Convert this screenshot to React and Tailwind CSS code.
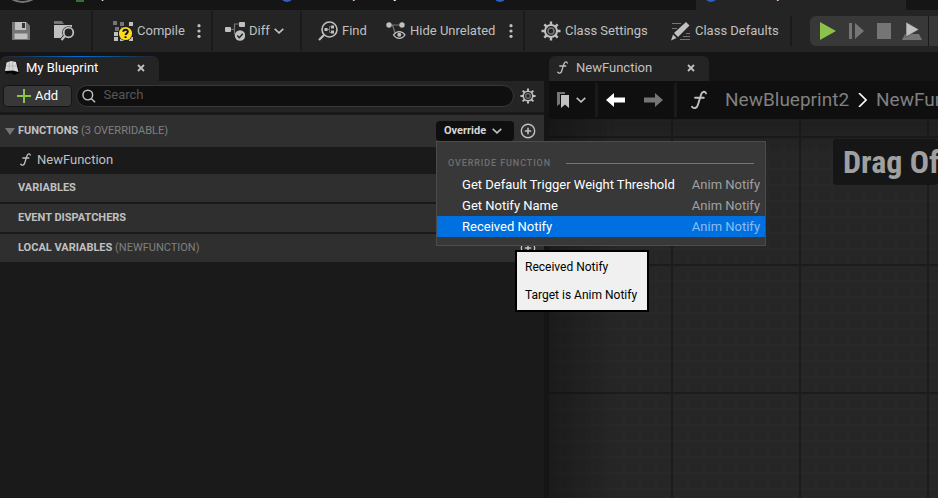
const sections = [
  { title: 'VARIABLES', note: '' },
  { title: 'EVENT DISPATCHERS', note: '' },
  { title: 'LOCAL VARIABLES', note: '(NEWFUNCTION)' },
]

const overrides = [
  { name: 'Get Default Trigger Weight Threshold', owner: 'Anim Notify' },
  { name: 'Get Notify Name', owner: 'Anim Notify' },
  { name: 'Received Notify', owner: 'Anim Notify', active: true },
]

function SaveIcon() {
  return (
    <svg width="18" height="18" viewBox="0 0 18 18">
      <path d="M0 0h14.500l3.500 3.500V18H0z" fill="#757575" />
      <path d="M3 0h11v8H3z" fill="#c0c0c0" />
      <path d="M10 1h3v5h-3z" fill="#333" />
      <path d="M2.500 11.500h13V17h-13z" fill="#c0c0c0" />
    </svg>
  )
}

function BrowseIcon() {
  return (
    <svg width="21" height="20" viewBox="0 0 21 20">
      <path d="M0 0h8l2 3H0z" fill="#757575" />
      <path d="M0 4h18v13H0z" fill="#c0c0c0" />
      <circle cx="14.500" cy="11.500" r="6.300" fill="#242424" />
      <path d="M10 13l-4 5h4l4-4z" fill="#242424" />
      <circle cx="14.500" cy="11.500" r="4.800" fill="none" stroke="#c0c0c0" strokeWidth="1.800" />
      <path d="M11 15l-3.500 4" stroke="#c0c0c0" strokeWidth="2.200" />
    </svg>
  )
}

function CompileIcon() {
  return (
    <svg width="20" height="20" viewBox="0 0 20 20">
      <path d="M0 0h4v4H0zM7 1h4v4H7zM2 6h4v4H2z" fill="#757575" />
      <path d="M16 1h4v4h-4zM1 11h4v4H1zM1 16h4v4H1zM7 16h4v4H7zM16 16h4v4h-4zM8 6h4v4H8z" fill="#c0c0c0" />
      <circle cx="12.500" cy="12.500" r="7.300" fill="#1a1a1a" />
      <circle cx="12.500" cy="12.500" r="6.600" fill="#fcdc1a" />
      <path d="M10.300 10.800c.2-2.800 4.600-2.600 4.500 0 0 1.600-2.200 1.500-2.200 3.200M12.500 15.200v1.900" fill="none" stroke="#151515" strokeWidth="2" />
    </svg>
  )
}

function DiffIcon() {
  return (
    <svg width="20" height="19" viewBox="0 0 20 19">
      <path d="M5 7.500h4.500M9.500 7.500V2H14M9.500 7.500v4l2 2" fill="none" stroke="#757575" strokeWidth="1.200" />
      <rect x="0" y="5" width="6" height="5" rx="1" fill="#c0c0c0" />
      <rect x="14" y="0" width="6" height="5" rx="1" fill="#c0c0c0" />
      <circle cx="15" cy="13.500" r="5.200" fill="#c0c0c0" />
      <path d="M12.300 13.500l2 2.200 3.500-4" fill="none" stroke="#242424" strokeWidth="1.500" />
    </svg>
  )
}

function FindIcon() {
  return (
    <svg width="20" height="20" viewBox="0 0 20 20">
      <circle cx="11.500" cy="8.500" r="7.500" fill="none" stroke="#c0c0c0" strokeWidth="1.600" />
      <path d="M6 14L1 19" stroke="#c0c0c0" strokeWidth="2.200" />
      <path d="M9 8.500h2.500M14 5.500h-2.500v6H14" fill="none" stroke="#757575" />
      <path d="M6.500 7h3v3h-3zM13 4.500h3v3h-3zM13 9.500h3v3h-3z" fill="#c0c0c0" />
    </svg>
  )
}

function HideIcon() {
  return (
    <svg width="20" height="18" viewBox="0 0 20 18">
      <path d="M3 3h13M6.500 3L9 11" fill="none" stroke="#757575" strokeWidth="1.200" />
      <circle cx="3" cy="3" r="2.700" fill="#c0c0c0" />
      <circle cx="16" cy="3" r="2.700" fill="#c0c0c0" />
      <path d="M7.500 13c3-4.500 8.500-4.500 11.500 0-3 4.500-8.500 4.500-11.500 0z" fill="#242424" stroke="#c0c0c0" strokeWidth="1.300" />
      <circle cx="13.300" cy="12.800" r="2" fill="#c0c0c0" />
    </svg>
  )
}

function GearIcon({ size }) {
  return (
    <svg width={size} height={size} viewBox="0 0 20 20">
      <g stroke="#c0c0c0" strokeWidth="2.400">
        <path d="M10 .5v19M.5 10h19M3.300 3.300l13.400 13.400M16.700 3.300L3.300 16.700" />
      </g>
      <circle cx="10" cy="10" r="6" fill="#242424" stroke="#c0c0c0" strokeWidth="2" />
      <circle cx="10" cy="10" r="3" fill="none" stroke="#757575" strokeWidth="1.600" />
    </svg>
  )
}

function DefaultsIcon() {
  return (
    <svg width="20" height="19" viewBox="0 0 20 19">
      <path d="M1 1.500h9M1 6.500h5M15 11.500h4M12 14.500h7M9 17.500h10" stroke="#757575" />
      <path d="M15 0l3.500 3.500L7 15l-4-4z" fill="#c0c0c0" />
      <path d="M2 12.500l3.500 3.500-5.500 2.500z" fill="#c0c0c0" />
    </svg>
  )
}

function Chevron() {
  return (
    <svg width="10" height="6" viewBox="0 0 10 6">
      <path d="M.7.800l4.300 4 4.300-4" fill="none" stroke="#c0c0c0" strokeWidth="1.600" />
    </svg>
  )
}

function Dots() {
  return (
    <button type="button" aria-label="More options" className="w-4 flex justify-center">
      <svg width="4" height="14" viewBox="0 0 4 14" fill="#c0c0c0">
        <circle cx="2" cy="1.700" r="1.600" />
        <circle cx="2" cy="7" r="1.600" />
        <circle cx="2" cy="12.300" r="1.600" />
      </svg>
    </button>
  )
}

function Divider() {
  return <div className="w-0.5 h-10 shrink-0 bg-[#1a1a1a]" />
}

function FunctionIcon({ className }) {
  return (
    <svg className={className} viewBox="0 0 11 13">
      <path
        d="M10.300 2C10 .3 7.700.3 7 2.600L4.700 10c-.6 2.300-3 2.700-4 1.200M2.800 5h6"
        fill="none"
        stroke="#c0c0c0"
        strokeWidth="1.300"
        strokeLinecap="round"
      />
    </svg>
  )
}

function AddCircle() {
  return (
    <svg width="16" height="16" viewBox="0 0 16 16" fill="none" stroke="#c0c0c0">
      <circle cx="8" cy="8" r="6.700" strokeWidth="1.400" />
      <path d="M8 4.800v6.400M4.800 8h6.400" strokeWidth="1.600" />
    </svg>
  )
}

function CloseIcon() {
  return (
    <svg width="8" height="8" viewBox="0 0 8 8">
      <path d="M1 1l6 6M7 1L1 7" stroke="#c0c0c0" strokeWidth="1.800" />
    </svg>
  )
}

function AssetTabs() {
  return (
    <div className="h-2.5 shrink-0 flex overflow-hidden whitespace-nowrap text-white">
      <div className="w-[76px] pl-3">
        <svg width="21" height="4" viewBox="0 0 21 4">
          <path d="M0-1Q10.500 5 21-1" fill="none" stroke="#757575" strokeWidth="2" />
        </svg>
      </div>
      <div className="w-[205px] flex gap-2">
        <span className="w-2 h-0.5 bg-[#3c6a3a]" />
        <span className="-mt-3.5 leading-4">Open</span>
      </div>
      <div className="w-[213px] flex gap-2">
        <span className="-mt-2.5 size-3 rounded-full bg-[#2f5fc0]" />
        <span className="-mt-3.5 leading-4">NewBlueprintKey</span>
      </div>
      <div className="w-[202px]">
        <span className="-mt-2.5 block size-3 rounded-full bg-[#2f5fc0]" />
      </div>
      <div className="w-[210px] pl-[9px] flex gap-2 bg-[#242424]">
        <span className="-mt-2.5 size-3 rounded-full bg-[#2f5fc0]" />
        <span className="-mt-3.5 leading-4">NewBlueprint2</span>
      </div>
    </div>
  )
}

function Toolbar() {
  return (
    <div className="h-[42px] shrink-0 flex items-center bg-[#242424] overflow-hidden whitespace-nowrap">
      <div className="w-[91px] shrink-0 pl-3 flex items-center gap-6">
        <button type="button" aria-label="Save"><SaveIcon /></button>
        <button type="button" aria-label="Browse"><BrowseIcon /></button>
      </div>
      <Divider />
      <div className="w-[118px] shrink-0 pl-5 flex items-center">
        <button type="button" className="w-[78px] flex items-center gap-1"><CompileIcon />Compile</button>
        <Dots />
      </div>
      <Divider />
      <div className="w-[87px] shrink-0 pl-3">
        <button type="button" className="flex items-center gap-1"><DiffIcon />Diff<Chevron /></button>
      </div>
      <Divider />
      <div className="w-[221px] shrink-0 pl-4 flex items-center">
        <button type="button" className="w-[68px] flex items-center gap-1"><FindIcon />Find</button>
        <button type="button" className="w-[117px] flex items-center gap-1"><HideIcon />Hide Unrelated</button>
        <Dots />
      </div>
      <Divider />
      <div className="w-[265px] shrink-0 pl-4 flex items-center">
        <button type="button" className="w-[130px] flex items-center gap-1"><GearIcon size={20} />Class Settings</button>
        <button type="button" className="flex items-center gap-1"><DefaultsIcon />Class Defaults</button>
      </div>
      <div className="w-0.5 h-[30px] shrink-0 bg-[#1a1a1a]" />
      <div className="ml-[18px] h-[30px] shrink-0 flex items-center rounded-l-md bg-[#383838]">
        <div className="w-[118px] pl-2.5 flex items-center">
          <button type="button" aria-label="Play" className="w-[28px]">
            <svg width="16" height="18" viewBox="0 0 16 18"><path d="M0 0l16 9-16 9z" fill="#8bc24a" /></svg>
          </button>
          <button type="button" aria-label="Step" className="w-[29px]">
            <svg width="16" height="16" viewBox="0 0 16 16" fill="#757575"><path d="M1 0h3v16H1zM7 0l9 8-9 8z" /></svg>
          </button>
          <button type="button" aria-label="Stop" className="w-[25px]">
            <svg width="14" height="16" viewBox="0 0 14 16"><path d="M0 0h14v16H0z" fill="#757575" /></svg>
          </button>
          <button type="button" aria-label="Eject">
            <svg width="20" height="18" viewBox="0 0 20 18">
              <path d="M3 12h14l3 6H0z" fill="#757575" />
              <path d="M4 0l13 7.500L4 15z" fill="#c0c0c0" stroke="#383838" strokeWidth=".6" />
            </svg>
          </button>
        </div>
        <div className="w-px h-[30px] bg-[#1a1a1a]" />
        <div className="w-20" />
      </div>
    </div>
  )
}

function OverrideMenu() {
  return (
    <div className="absolute z-10 top-full left-0 w-[330px] pt-[13px] pb-2 bg-[#383838] border border-[#4c4c4c] text-[13px]">
      <div className="px-[11px] flex items-center gap-[15px]">
        <span className="text-[9px] leading-4 font-medium tracking-widest text-[#707070]">OVERRIDE FUNCTION</span>
        <div className="h-px flex-1 bg-[#757575]" />
      </div>
      <ul className="pt-[3px]">
        {overrides.map((item) => (
          <li key={item.name} className={item.active ? 'bg-[#0070e0]' : ''}>
            <button type="button" className="w-full h-[21px] pl-[25px] pr-[5px] flex items-center justify-between">
              <span className="text-white">{item.name}</span>
              <span className={item.active ? 'text-[#8cbcf0]' : 'text-[#a0a0a0]'}>{item.owner}</span>
            </button>
          </li>
        ))}
      </ul>
      <div
        role="tooltip"
        className="absolute top-[108px] left-[78px] w-[134px] h-[62px] px-2 bg-[#f0f0f0] border-2 border-black text-xs leading-[28px] text-black flex flex-col justify-center"
      >
        <p>Received Notify</p>
        <p>Target is Anim Notify</p>
      </div>
    </div>
  )
}

function MyBlueprint() {
  return (
    <section className="w-[58%] shrink-0 flex flex-col">
      <div className="h-[29px] flex items-end">
        <div className="w-[159px] h-[25px] px-1 pb-0.5 flex flex-col rounded-t-md bg-[#242424] overflow-hidden">
          <div className="h-px shrink-0 bg-linear-to-r from-transparent via-[#0070e0] to-transparent" />
          <div className="flex-1 flex items-center text-white">
            <svg width="16" height="15" viewBox="0 0 16 15">
              <path d="M1 9l2-8h10l2 8v3l-5 2-3-2-5 1z" fill="#050505" />
              <path d="M1 10L2.500 1.500 7 0l5 1L14.500 11 9 9.500z" fill="#d8d8d8" />
              <path d="M5.500 1L5 9.500M8.500 1l.5 8.500M2 5h11" stroke="#a8a8a8" strokeWidth=".6" />
            </svg>
            <span className="pl-1.5 flex-1">My Blueprint</span>
            <button type="button" aria-label="Close My Blueprint" className="pr-2.5"><CloseIcon /></button>
          </div>
        </div>
      </div>
      <div className="h-[31px] pb-0.5 pl-[3px] pr-2 flex items-center bg-[#242424]">
        <button type="button" className="w-[69px] h-[22px] flex items-center justify-center gap-1 rounded bg-[#383838] border border-[#141414] text-white">
          <svg width="14" height="14" viewBox="0 0 14 14"><path d="M7 0v14M0 7h14" stroke="#8bc24a" strokeWidth="2" /></svg>
          Add
        </button>
        <label className="ml-1 mr-1.5 h-[22px] flex-1 flex items-center rounded-full bg-[#0f0f0f] border border-[#383838] pl-[5px]">
          <svg width="14" height="14" viewBox="0 0 14 14" fill="none" stroke="#c0c0c0" strokeWidth="1.500">
            <circle cx="6" cy="6" r="5" />
            <path d="M9.500 9.500L13.500 13.500" />
          </svg>
          <input type="text" aria-label="Search" placeholder="Search" className="w-full pl-2 pb-0.5 bg-transparent outline-none placeholder:text-[#575757]" />
        </label>
        <button type="button" aria-label="Panel settings"><GearIcon size={16} /></button>
      </div>
      <div className="flex-1 pt-[3px] bg-[#1a1a1a] text-[11px]">
        <div className="h-8 pl-[5px] pr-2 flex items-center bg-[#2f2f2f]">
          <svg width="10" height="7" viewBox="0 0 10 7"><path d="M0 0h10L5 7z" fill="#757575" /></svg>
          <h2 className="pl-[3px] flex-1 text-[#808080]"><b className="font-bold text-[#c0c0c0]">FUNCTIONS</b> (3 OVERRIDABLE)</h2>
          <div className="relative mr-1.5">
            <button type="button" className="w-[78px] h-5 pl-2 flex items-center gap-1.5 rounded bg-[#0f0f0f] font-bold text-[#d8d8d8]">
              Override
              <Chevron />
            </button>
            <OverrideMenu />
          </div>
          <button type="button" aria-label="Add function"><AddCircle /></button>
        </div>
        <div className="h-[27px] pb-0.5 pl-5 flex items-center gap-1.5 text-[13px]">
          <FunctionIcon className="w-[11px] h-[13px]" />
          NewFunction
        </div>
        <div className="flex flex-col gap-0.5">
          {sections.map((section) => (
            <div key={section.title} className="h-7 pl-[18px] pr-2 flex items-center bg-[#2f2f2f]">
              <h2 className="flex-1 text-[#808080]"><b className="font-bold text-[#c0c0c0]">{section.title}</b> {section.note}</h2>
              <button type="button" aria-label={'Add to ' + section.title}><AddCircle /></button>
            </div>
          ))}
        </div>
      </div>
    </section>
  )
}

function Graph() {
  return (
    <section className="flex-1 min-w-0 ml-[5px] flex flex-col whitespace-nowrap">
      <div className="h-[29px] flex items-end">
        <div className="w-40 h-[25px] px-2 pb-0.5 flex items-center rounded-t-md bg-[#242424]">
          <FunctionIcon className="w-[11px] h-[13px]" />
          <span className="pl-2 flex-1">NewFunction</span>
          <button type="button" aria-label="Close NewFunction" className="pr-1.5"><CloseIcon /></button>
        </div>
      </div>
      <div className="h-[38px] shrink-0 flex items-center overflow-hidden bg-[#0f0f0f]">
        <button type="button" aria-label="Bookmarks" className="w-[46px] shrink-0 pl-2 flex items-center gap-[7px]">
          <svg width="12" height="16" viewBox="0 0 12 16">
            <path d="M0 0h8v2H3v10l-3 2z" fill="#757575" />
            <path d="M4 3h8v13l-4-3.500L4 16z" fill="#c0c0c0" />
          </svg>
          <Chevron />
        </button>
        <div className="w-[3px] h-[34px] shrink-0 bg-[#1a1a1a]" />
        <button type="button" aria-label="Back" className="w-[38px] shrink-0 pl-2">
          <svg width="19" height="14" viewBox="0 0 19 14"><path d="M0 7l8-7v4.500h11v5H8V14z" fill="#fff" /></svg>
        </button>
        <button type="button" aria-label="Forward" className="w-[38px] shrink-0 pl-2">
          <svg width="19" height="14" viewBox="0 0 19 14"><path d="M19 7l-8-7v4.500H0v5h11V14z" fill="#757575" /></svg>
        </button>
        <div className="w-[3px] h-[34px] shrink-0 bg-[#1a1a1a]" />
        <FunctionIcon className="ml-3.5 w-4 h-5 shrink-0" />
        <nav className="pl-[18px] flex shrink-0 items-center gap-[9px] text-[19px] text-[#808080]">
          <a href="#NewBlueprint2">NewBlueprint2</a>
          <svg width="9" height="14" viewBox="0 0 9 14"><path d="M1 0l7 7-7 7" fill="none" stroke="#fff" strokeWidth="1.600" /></svg>
          <a href="#NewFunction">NewFunction</a>
        </nav>
      </div>
      <div className="flex-1 overflow-hidden bg-[#262626] bg-[linear-gradient(90deg,#0000004d,transparent_70px),linear-gradient(180deg,#00000033,transparent_40px),linear-gradient(90deg,#1c1c1c_2px,transparent_2px),linear-gradient(180deg,#1c1c1c_2px,transparent_2px),linear-gradient(90deg,#282828_2px,transparent_2px),linear-gradient(180deg,#282828_2px,transparent_2px)] bg-size-[auto,auto,128px_128px,128px_128px,16px_16px,16px_16px] bg-position-[0_0,0_0,122px_0,0_17px,10px_0,0_1px]">
        <div className="mt-5 ml-[284px] h-[46px] pl-2.5 flex items-center rounded bg-[#161616] overflow-hidden font-['Roboto_Condensed','Roboto',sans-serif] text-[32px] font-bold text-[#a0a0a0]">
          Drag Off
        </div>
      </div>
    </section>
  )
}

export default function App() {
  return (
    <div className="min-h-screen flex flex-col overflow-hidden bg-[#151515] font-['Roboto',sans-serif] text-[13px] text-[#c0c0c0]">
      <AssetTabs />
      <Toolbar />
      <main className="flex-1 flex">
        <MyBlueprint />
        <Graph />
      </main>
    </div>
  )
}
